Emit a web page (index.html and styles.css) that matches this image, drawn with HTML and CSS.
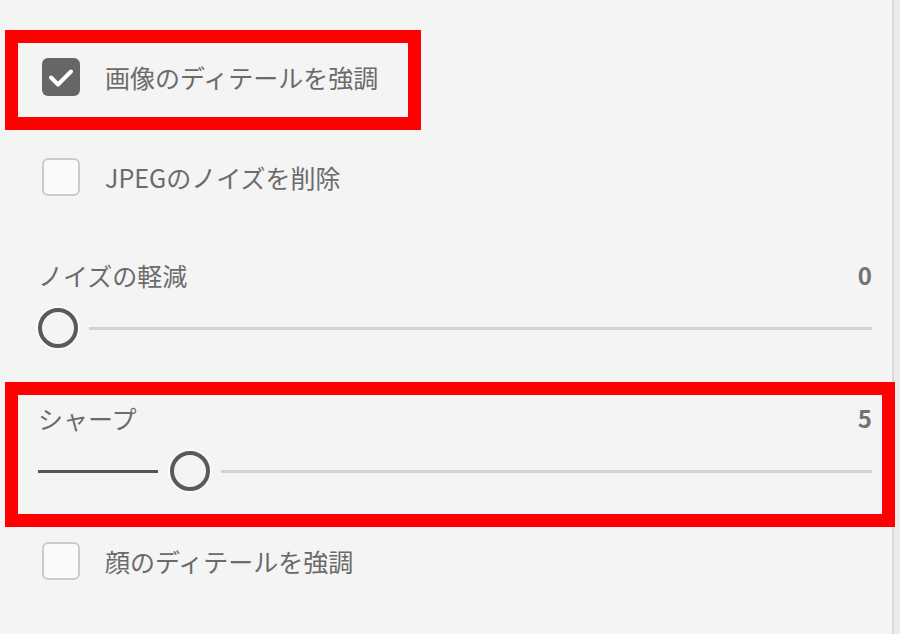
FILE: index.html
```html
<!DOCTYPE html>
<html lang="ja">
<head>
<meta charset="utf-8">
<title>詳細設定</title>
<link rel="stylesheet" href="styles.css">
</head>
<body>
<div class="app">
  <div class="panel">
    <div class="hl hl-check">
      <div class="check-row">
        <span class="box checked">
          <svg width="38" height="38" viewBox="0 0 38 38"><path d="M9 19.5 L16 26.5 L29 13.5" fill="none" stroke="#ffffff" stroke-width="4" stroke-linecap="round" stroke-linejoin="round"/></svg>
        </span>
        <span class="lbl">画像のディテールを強調</span>
      </div>
    </div>

    <div class="check-row row-jpeg">
      <span class="box"></span>
      <span class="lbl">JPEGのノイズを削除</span>
    </div>

    <div class="slider-group sg-noise">
      <div class="slider-head"><span class="lbl">ノイズの軽減</span><span class="val">0</span></div>
      <div class="slider">
        <span class="thumb"></span>
        <span class="track"></span>
      </div>
    </div>

    <div class="hl hl-slider">
      <div class="slider-head"><span class="lbl">シャープ</span><span class="val">5</span></div>
      <div class="slider">
        <span class="fill" style="width:120px"></span>
        <span class="thumb"></span>
        <span class="track"></span>
      </div>
    </div>

    <div class="check-row row-face">
      <span class="box"></span>
      <span class="lbl">顔のディテールを強調</span>
    </div>
  </div>
  <div class="edge"></div>
</div>
</body>
</html>
```

FILE: styles.css
```css
html, body {
  margin: 0;
  padding: 0;
}
body {
  background: #f4f4f4;
  font-family: "Noto Sans CJK JP", "Noto Sans", sans-serif;
  color: #6b6b6b;
  width: 900px;
  height: 634px;
  overflow: hidden;
}
.app {
  display: flex;
  height: 634px;
}
.panel {
  flex: 1;
  padding: 30px 20px 0 38px;
  display: flex;
  flex-direction: column;
  align-items: stretch;
}
.edge {
  width: 6px;
  border-left: 2px solid #d9d9d9;
  background: #ebebeb;
}

/* red highlight annotation boxes */
.hl {
  position: relative;
  z-index: 1;
  border: 13px solid #ff0000;
  box-sizing: border-box;
}
.hl-check {
  margin-left: -33px;
  width: 416px;
  height: 100px;
  padding: 15px 0 0 24px;
}
.hl-slider {
  margin: 34px -23px 0 -33px;
  padding: 8px 10px 23px 20px;
}

/* checkbox rows */
.check-row {
  display: flex;
  align-items: center;
  height: 38px;
}
.row-jpeg {
  margin: 28px 0 0 4px;
}
.row-face {
  margin: 15px 0 0 4px;
}
.box {
  width: 38px;
  height: 38px;
  box-sizing: border-box;
  border-radius: 6px;
  border: 2px solid #cbcbcb;
  background: #fafafa;
  flex: none;
}
.box.checked {
  border: none;
  background: #666666;
}
.box svg {
  display: block;
}
.check-row .lbl {
  margin-left: 25px;
}
.lbl {
  font-size: 25px;
  line-height: 30px;
  white-space: nowrap;
}

/* sliders */
.sg-noise {
  margin-top: 64px;
}
.slider-head {
  display: flex;
  justify-content: space-between;
  align-items: center;
  height: 30px;
}
.val {
  font-size: 24px;
  font-weight: 700;
  line-height: 30px;
  color: #727272;
}
.slider {
  display: flex;
  align-items: center;
  height: 40px;
  margin-top: 18px;
}
.fill {
  height: 3px;
  background: #555555;
  margin-right: 12px;
  flex: none;
}
.thumb {
  width: 40px;
  height: 40px;
  box-sizing: border-box;
  border: 4px solid #5a5a5a;
  border-radius: 50%;
  background: #f4f4f4;
  box-shadow: 0 0 0 2px #fbfbfb;
  flex: none;
}
.track {
  flex: 1;
  height: 3px;
  margin-left: 11px;
  background: #d2d2d2;
}
```
